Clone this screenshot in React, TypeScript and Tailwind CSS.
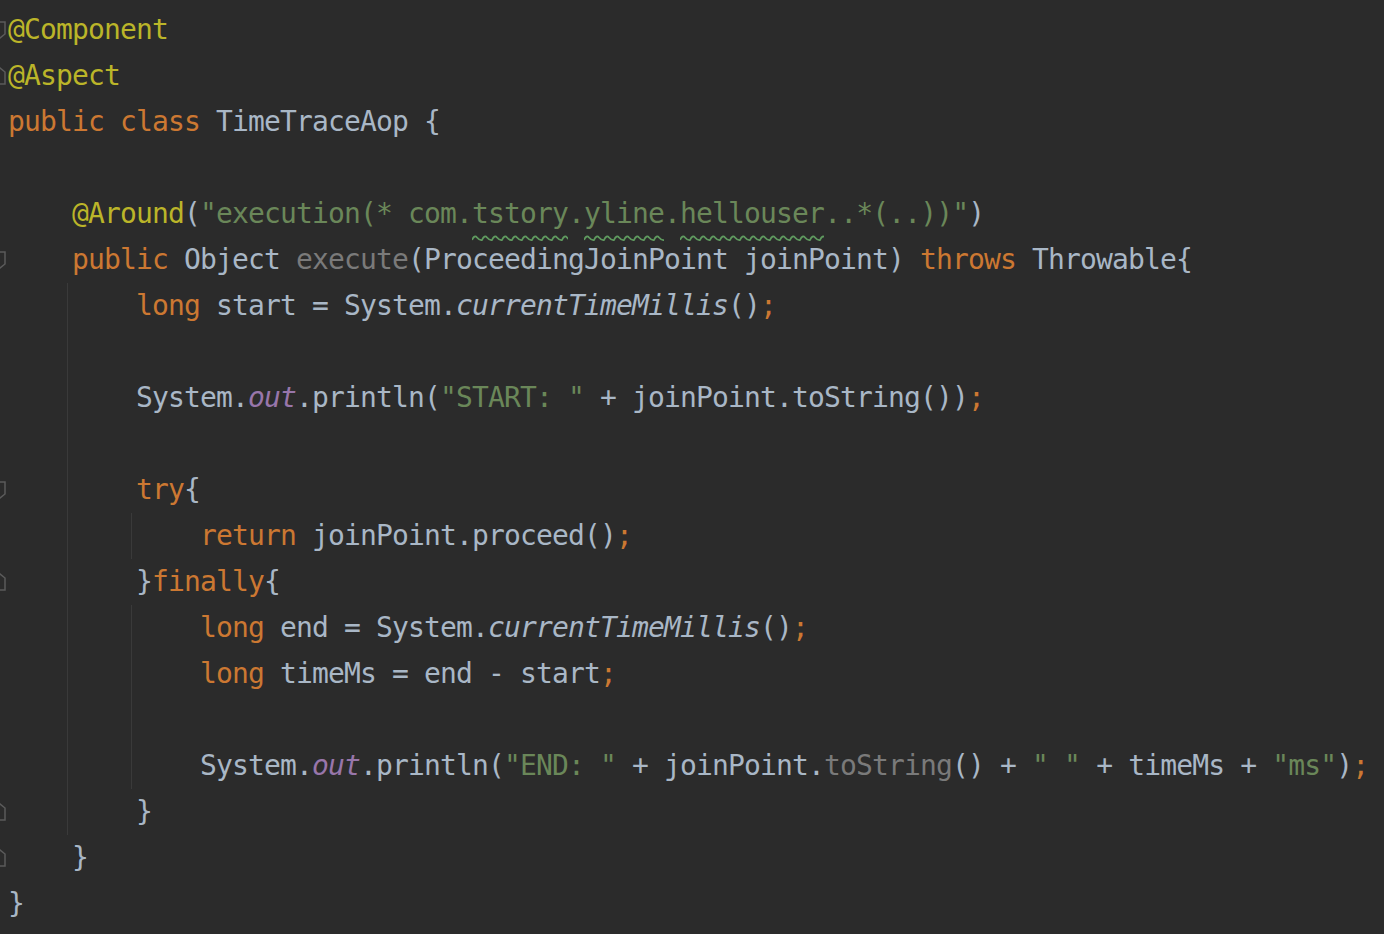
import React from "react";

type Tok = { t: string; c?: string; wave?: boolean };
type Line = { ind: number; toks: Tok[]; fold?: "open" | "close" };

const K = "text-[#cc7832]"; // keyword / semicolon
const A = "text-[#bbb529]"; // annotation
const S = "text-[#6a8759]"; // string
const G = "text-[#7a7a7a]"; // unused / gray
const F = "text-[#9876aa] italic"; // static field
const I = "italic"; // static method

const lines: Line[] = [
  { ind: 0, fold: "open", toks: [{ t: "@Component", c: A }] },
  { ind: 0, fold: "close", toks: [{ t: "@Aspect", c: A }] },
  { ind: 0, toks: [{ t: "public class ", c: K }, { t: "TimeTraceAop {" }] },
  { ind: 0, toks: [] },
  {
    ind: 1,
    toks: [
      { t: "@Around", c: A },
      { t: "(" },
      { t: "\"execution(* com.", c: S },
      { t: "tstory", c: S, wave: true },
      { t: ".", c: S },
      { t: "yline", c: S, wave: true },
      { t: ".", c: S },
      { t: "hellouser", c: S, wave: true },
      { t: "..*(..))\"", c: S },
      { t: ")" },
    ],
  },
  {
    ind: 1,
    fold: "open",
    toks: [
      { t: "public", c: K },
      { t: " Object " },
      { t: "execute", c: G },
      { t: "(ProceedingJoinPoint joinPoint) " },
      { t: "throws", c: K },
      { t: " Throwable{" },
    ],
  },
  {
    ind: 2,
    toks: [
      { t: "long", c: K },
      { t: " start = System." },
      { t: "currentTimeMillis", c: I },
      { t: "()" },
      { t: ";", c: K },
    ],
  },
  { ind: 0, toks: [] },
  {
    ind: 2,
    toks: [
      { t: "System." },
      { t: "out", c: F },
      { t: ".println(" },
      { t: "\"START: \"", c: S },
      { t: " + joinPoint.toString())" },
      { t: ";", c: K },
    ],
  },
  { ind: 0, toks: [] },
  { ind: 2, fold: "open", toks: [{ t: "try", c: K }, { t: "{" }] },
  {
    ind: 3,
    toks: [{ t: "return", c: K }, { t: " joinPoint.proceed()" }, { t: ";", c: K }],
  },
  { ind: 2, fold: "close", toks: [{ t: "}" }, { t: "finally", c: K }, { t: "{" }] },
  {
    ind: 3,
    toks: [
      { t: "long", c: K },
      { t: " end = System." },
      { t: "currentTimeMillis", c: I },
      { t: "()" },
      { t: ";", c: K },
    ],
  },
  {
    ind: 3,
    toks: [{ t: "long", c: K }, { t: " timeMs = end - start" }, { t: ";", c: K }],
  },
  { ind: 0, toks: [] },
  {
    ind: 3,
    toks: [
      { t: "System." },
      { t: "out", c: F },
      { t: ".println(" },
      { t: "\"END: \"", c: S },
      { t: " + joinPoint." },
      { t: "toString", c: G },
      { t: "() + " },
      { t: "\" \"", c: S },
      { t: " + timeMs + " },
      { t: "\"ms\"", c: S },
      { t: ")" },
      { t: ";", c: K },
    ],
  },
  { ind: 2, fold: "close", toks: [{ t: "}" }] },
  { ind: 1, fold: "close", toks: [{ t: "}" }] },
  { ind: 0, toks: [{ t: "}" }] },
];

// rows crossed by the method-body guide and by the try/finally guide
const guide1 = new Set([6, 7, 8, 9, 10, 11, 12, 13, 14, 15, 16, 17]);
const guide2 = new Set([11, 13, 14, 15, 16]);

const FoldMark = ({ kind }: { kind?: "open" | "close" }) => (
  <svg
    width="12"
    height="18"
    viewBox="0 0 12 18"
    fill="none"
    stroke="#5b5b5b"
    strokeWidth="1.5"
    className={`shrink-0 -ml-[6px] ${kind ? "" : "invisible"}`}
  >
    {kind === "close" ? (
      <path d="M1 5 L6 1 L11 5 L11 17 L1 17 Z" />
    ) : (
      <path d="M1 1 L11 1 L11 13 L6 17 L1 13 Z" />
    )}
  </svg>
);

// typo squiggle under a word
const Squiggle = ({ width }: { width: number }) => {
  let d = "M0 6";
  for (let x = 0; x < width; x += 10) {
    d += ` Q${x + 2.5} 0.5 ${x + 5} 3.5 T${x + 10} 6`;
  }
  return (
    <svg
      width={width}
      height="8"
      viewBox={`0 0 ${width} 8`}
      className="absolute left-0 bottom-[-7px]"
      fill="none"
      stroke="#5f9a5f"
      strokeWidth="1.8"
    >
      <path d={d} />
    </svg>
  );
};

const IndentCell = ({ guide }: { guide: boolean }) => (
  <div
    className={`self-stretch w-[60px] mr-[4px] shrink-0 ${
      guide ? "border-r border-[#3a3a3a]" : ""
    }`}
  />
);

export default function App() {
  return (
    <div className="w-[1384px] h-[934px] bg-[#2b2b2b] overflow-hidden">
      <div
        className="flex flex-col pt-[7px] text-[28px] tracking-[-0.857px] text-[#a9b7c6]"
        style={{ fontFamily: '"DejaVu Sans Mono", "Liberation Mono", monospace' }}
      >
        {lines.map((ln, i) => {
          const need = guide2.has(i) ? 2 : guide1.has(i) ? 1 : 0;
          const cells = Math.max(ln.ind, need);
          return (
            <div key={i} className="h-[46px] flex items-center whitespace-pre">
              <div className="w-[8px] shrink-0 flex items-center">
                <FoldMark kind={ln.fold} />
              </div>
              {Array.from({ length: cells }).map((_, k) => (
                <IndentCell
                  key={k}
                  guide={(k === 0 && guide1.has(i)) || (k === 1 && guide2.has(i))}
                />
              ))}
              {ln.toks.map((tk, j) =>
                tk.wave ? (
                  <span key={j} className={`relative ${tk.c}`}>
                    {tk.t}
                    <Squiggle width={tk.t.length * 16} />
                  </span>
                ) : (
                  <span key={j} className={tk.c}>
                    {tk.t}
                  </span>
                )
              )}
            </div>
          );
        })}
      </div>
    </div>
  );
}
